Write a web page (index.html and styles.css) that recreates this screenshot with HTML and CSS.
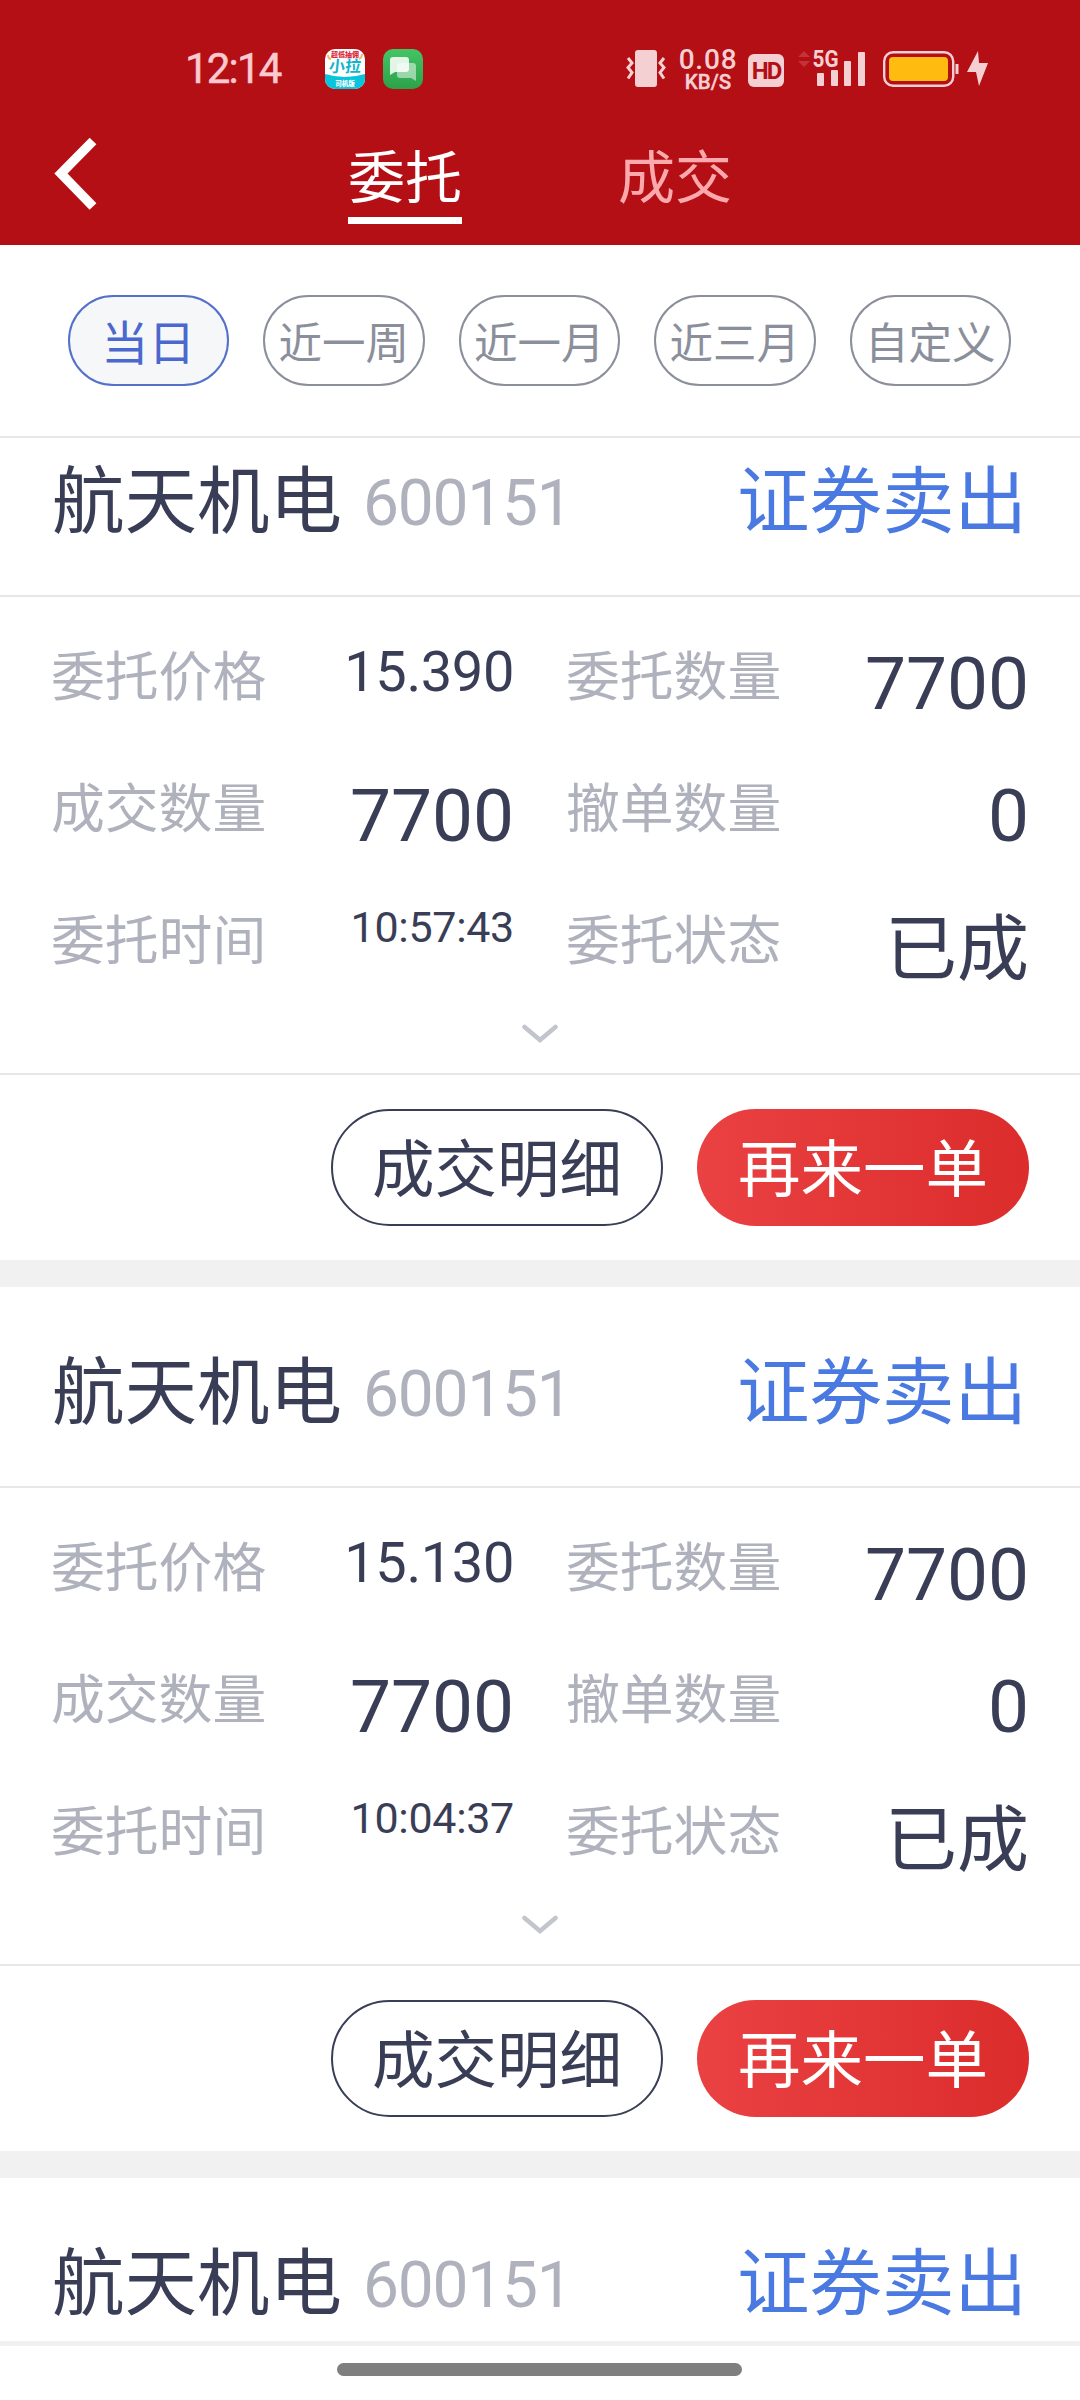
FILE: index.html
```
<!DOCTYPE html>
<html lang="zh-CN">
<head>
    <meta charset="UTF-8">
    <meta name="viewport" content="width=device-width, initial-scale=1.0">
    <title>委托</title>
    <link rel="stylesheet" href="styles.css">
</head>
<body>
    <header class="header">
        <div class="status-bar">
            <div class="status-left">
                <span class="clock">12:14</span>
                <svg class="app-icon" viewBox="0 0 40 40">
                    <defs><clipPath id="appClip"><rect width="40" height="40" rx="10"/></clipPath></defs>
                    <g clip-path="url(#appClip)">
                        <rect width="40" height="40" fill="#fff"/>
                        <path d="M0 25Q20 31 40 25V40H0Z" fill="#08c4dc"/>
                        <path d="M3 6q0 4 3 4M37 5q0 4-3 5" stroke="#f0b968" stroke-width="2" fill="none"/>
                        <text x="20" y="7.5" font-size="7" font-weight="900" fill="#e0283c" text-anchor="middle">超低抽佣</text>
                        <text x="20" y="23" font-size="16" font-weight="700" fill="#12b3cd" text-anchor="middle" transform="skewX(-6) translate(2 0)">小拉</text>
                        <text x="20" y="36.5" font-size="6.5" font-weight="900" fill="#fff" text-anchor="middle">司机版</text>
                    </g>
                </svg>
                <svg class="app-icon" viewBox="0 0 40 40">
                    <defs><linearGradient id="msgBg" x2="0" y2="1"><stop stop-color="#45c465"/><stop offset="1" stop-color="#2ba24a"/></linearGradient></defs>
                    <rect width="40" height="40" rx="10" fill="url(#msgBg)"/>
                    <path d="M17 14h13q3 0 3 3v15l-5-3H17q-3 0-3-3v-9q0-3 3-3z" fill="#fff" opacity=".5"/>
                    <path d="M10 8h13q3 0 3 3v9q0 3-3 3H12l-5 3V11q0-3 3-3z" fill="#fff" opacity=".85"/>
                </svg>
            </div>
            <div class="status-right">
                <svg class="vibrate" viewBox="0 0 40 38">
                    <rect x="9" y="0" width="22" height="37" rx="3"/>
                    <path d="M2 8l4 5-4 4.500 4 5-4 6M38 8l-4 5 4 4.500-4 5 4 6"/>
                </svg>
                <div class="net-speed">
                    <span class="speed-num">0.08</span>
                    <span class="speed-unit">KB/S</span>
                </div>
                <span class="hd">HD</span>
                <svg class="signal" viewBox="0 0 70 38">
                    <path d="M0 7l6-6 6 6zM0 11l6 6 6-6z" fill="#c5333a"/>
                    <text x="14.500" y="17" font-size="24" font-weight="700" textLength="26" lengthAdjust="spacingAndGlyphs">5G</text>
                    <rect x="19" y="23" width="7" height="13" rx="1"/>
                    <rect x="33" y="20" width="7" height="16" rx="1"/>
                    <rect x="46" y="11" width="7" height="25" rx="1"/>
                    <rect x="60" y="2" width="7" height="34" rx="1"/>
                </svg>
                <svg class="battery" viewBox="0 0 76 36">
                    <rect x="1.200" y="1.200" width="69" height="33.500" rx="9"/>
                    <path d="M74 13v10" stroke-width="3"/>
                    <rect x="6" y="6" width="59" height="24" rx="4" class="charge"/>
                </svg>
                <svg class="bolt" viewBox="0 0 21 36"><path d="M11 0L0 21h9l3 14 9-23h-9z"/></svg>
            </div>
        </div>
        <nav class="nav">
            <svg class="back" viewBox="0 0 44 74"><path d="M39 4L7 36.500l32 33"/></svg>
            <div class="tabs">
                <span class="tab active">委托</span>
                <span class="tab">成交</span>
            </div>
        </nav>
    </header>

    <div class="filters">
        <span class="chip active">当日</span>
        <span class="chip">近一周</span>
        <span class="chip">近一月</span>
        <span class="chip">近三月</span>
        <span class="chip">自定义</span>
    </div>

    <main class="order-list">
        <section class="order">
            <div class="order-head">
                <span class="name">航天机电</span>
                <span class="code">600151</span>
                <span class="side">证券卖出</span>
            </div>
            <div class="order-body">
                <div class="item"><span class="label">委托价格</span><span class="value price">15.390</span></div>
                <div class="item"><span class="label">委托数量</span><span class="value">7700</span></div>
                <div class="item"><span class="label">成交数量</span><span class="value">7700</span></div>
                <div class="item"><span class="label">撤单数量</span><span class="value">0</span></div>
                <div class="item"><span class="label">委托时间</span><span class="value time">10:57:43</span></div>
                <div class="item"><span class="label">委托状态</span><span class="value status">已成</span></div>
            </div>
            <div class="expand"><svg viewBox="0 0 36 20"><path d="M2.500 3L18 16 33.500 3"/></svg></div>
            <div class="actions">
                <span class="btn">成交明细</span>
                <span class="btn primary">再来一单</span>
            </div>
        </section>

        <section class="order">
            <div class="order-head">
                <span class="name">航天机电</span>
                <span class="code">600151</span>
                <span class="side">证券卖出</span>
            </div>
            <div class="order-body">
                <div class="item"><span class="label">委托价格</span><span class="value price">15.130</span></div>
                <div class="item"><span class="label">委托数量</span><span class="value">7700</span></div>
                <div class="item"><span class="label">成交数量</span><span class="value">7700</span></div>
                <div class="item"><span class="label">撤单数量</span><span class="value">0</span></div>
                <div class="item"><span class="label">委托时间</span><span class="value time">10:04:37</span></div>
                <div class="item"><span class="label">委托状态</span><span class="value status">已成</span></div>
            </div>
            <div class="expand"><svg viewBox="0 0 36 20"><path d="M2.500 3L18 16 33.500 3"/></svg></div>
            <div class="actions">
                <span class="btn">成交明细</span>
                <span class="btn primary">再来一单</span>
            </div>
        </section>

        <section class="order">
            <div class="order-head">
                <span class="name">航天机电</span>
                <span class="code">600151</span>
                <span class="side">证券卖出</span>
            </div>
        </section>
    </main>

    <footer class="gesture"><div class="gesture-bar"></div></footer>
</body>
</html>
```
FILE: styles.css
```
:root {
    --red: #b40f15;
    --ink: #393e56;
    --muted: #afb2bd;
    --line: #e6e7e9;
    --status: #f5d0d3;
}

* {
    box-sizing: border-box;
}

body {
    margin: 0;
    width: 1080px;
    height: 2400px;
    display: flex;
    flex-direction: column;
    overflow: hidden;
    background: #fff;
    color: var(--ink);
    font-family: Roboto, "Noto Sans CJK SC", sans-serif;
}

.header {
    height: 245px;
    flex: none;
    background: var(--red);
}

/* status bar */
.status-bar {
    height: 137px;
    padding: 0 92px 0 185px;
    display: flex;
    justify-content: space-between;
    align-items: center;
    color: var(--status);
    fill: var(--status);
}

.status-left,
.status-right {
    display: flex;
    align-items: center;
}

.clock {
    width: 140px;
    font-size: 42px;
    letter-spacing: -1.8px;
    color: #fbc9cf;
    -webkit-text-stroke: 0.5px #fbc9cf;
}

.app-icon {
    width: 40px;
    height: 40px;
    margin-right: 18px;
}

.vibrate {
    width: 40px;
    height: 38px;
}

.vibrate path {
    fill: none;
    stroke: var(--status);
    stroke-width: 3;
}

.net-speed {
    width: 60px;
    margin: 3px 0 0 12px;
    display: flex;
    flex-direction: column;
    align-items: center;
    font-weight: 500;
}

.speed-num {
    font-size: 28px;
    line-height: 24px;
    letter-spacing: 0.8px;
}

.speed-unit {
    font-size: 20.500px;
    line-height: 21px;
    -webkit-text-stroke: 0.4px var(--status);
}

.hd {
    width: 36px;
    height: 33px;
    margin: 4px 14px 0 10px;
    border-radius: 6px;
    background: var(--status);
    color: var(--red);
    font-size: 24px;
    font-weight: 700;
    line-height: 34px;
    text-align: center;
    letter-spacing: -2px;
}

.signal {
    width: 70px;
    height: 38px;
    overflow: visible;
}

.battery {
    width: 76px;
    height: 36px;
    margin-left: 15px;
    fill: none;
    stroke: var(--status);
    stroke-width: 2.4;
}

.battery .charge {
    fill: #ffbb10;
    stroke: none;
}

.bolt {
    width: 21px;
    height: 36px;
    margin-left: 8px;
}

/* title tabs */
.nav {
    height: 108px;
    padding-left: 54px;
    display: flex;
}

.back {
    width: 44px;
    height: 74px;
    fill: none;
    stroke: #fff;
    stroke-width: 9.5;
}

.tabs {
    display: flex;
    gap: 156px;
    margin-left: 250px;
}

.tab {
    height: 87px;
    font-size: 57px;
    line-height: 84px;
    color: #fba9ac;
}

.tab.active {
    color: #fff;
    border-bottom: 7px solid #fff;
}

/* date filter */
.filters {
    height: 193px;
    flex: none;
    padding: 50px 0 0 67.500px;
    display: flex;
    gap: 34px;
    border-bottom: 2px solid var(--line);
}

.chip {
    width: 161.500px;
    height: 91px;
    border: 2px solid #8b8f9b;
    border-radius: 46px;
    color: #8b8f9b;
    font-size: 43.500px;
    line-height: 96px;
    text-align: center;
}

.chip.active {
    border-color: #5470cb;
    background: #f6f7f9;
    color: #4a68cd;
    font-size: 47px;
    line-height: 94px;
}

/* orders, the first one is scrolled under the filter */
.order-list {
    height: 1903px;
    flex: none;
    overflow: hidden;
}

.order:first-child {
    margin-top: -42px;
}

.order {
    height: 891px;
    border-bottom: 27px solid #f1f1f1;
}

.order-head {
    height: 201px;
    padding: 0 53px 0 52px;
    display: flex;
    align-items: center;
    border-bottom: 2px solid var(--line);
}

.name,
.side {
    font-size: 72.500px;
}

.code {
    margin-left: 21px;
    padding-top: 15px;
    font-size: 64px;
    letter-spacing: -1.2px;
    color: var(--muted);
}

.side {
    margin-left: auto;
    color: #4a79e2;
}

.order-body {
    padding: 38px 51px 0;
    display: grid;
    grid-template-columns: 1fr 1fr;
    grid-auto-rows: 132px;
    column-gap: 52px;
}

.item {
    display: flex;
    justify-content: space-between;
}

.label {
    font-size: 53.8px;
    line-height: 86px;
    color: var(--muted);
}

.value {
    font-size: 73px;
    line-height: 98px;
}

.value.price {
    font-size: 56px;
    line-height: 74px;
    letter-spacing: -0.4px;
}

.value.time {
    font-size: 43px;
    line-height: 57px;
    letter-spacing: -0.3px;
}

.value.status {
    font-size: 72px;
    line-height: 102px;
}

.expand {
    height: 42px;
    display: flex;
    justify-content: center;
}

.expand svg {
    width: 36px;
    height: 20px;
    margin-top: -7px;
    fill: none;
    stroke: #c2c5cc;
    stroke-width: 4.5;
    stroke-linecap: round;
}

.actions {
    padding: 34px 51px 0;
    display: flex;
    justify-content: flex-end;
    gap: 34px;
    border-top: 2px solid var(--line);
}

.btn {
    width: 332px;
    height: 117px;
    border: 2px solid var(--ink);
    border-radius: 59px;
    font-size: 62.500px;
    line-height: 119px;
    text-align: center;
}

.btn.primary {
    border: none;
    background: linear-gradient(90deg, #ea4142, #dc2c2c);
    color: #fff;
    line-height: 123px;
}

/* system gesture area */
.gesture {
    flex: 1;
    padding-top: 17px;
    border-top: 5px solid #f1f1f1;
}

.gesture-bar {
    width: 405px;
    height: 13px;
    margin: 0 auto 0 337px;
    border-radius: 7px;
    background: #7f7f7f;
}
```
